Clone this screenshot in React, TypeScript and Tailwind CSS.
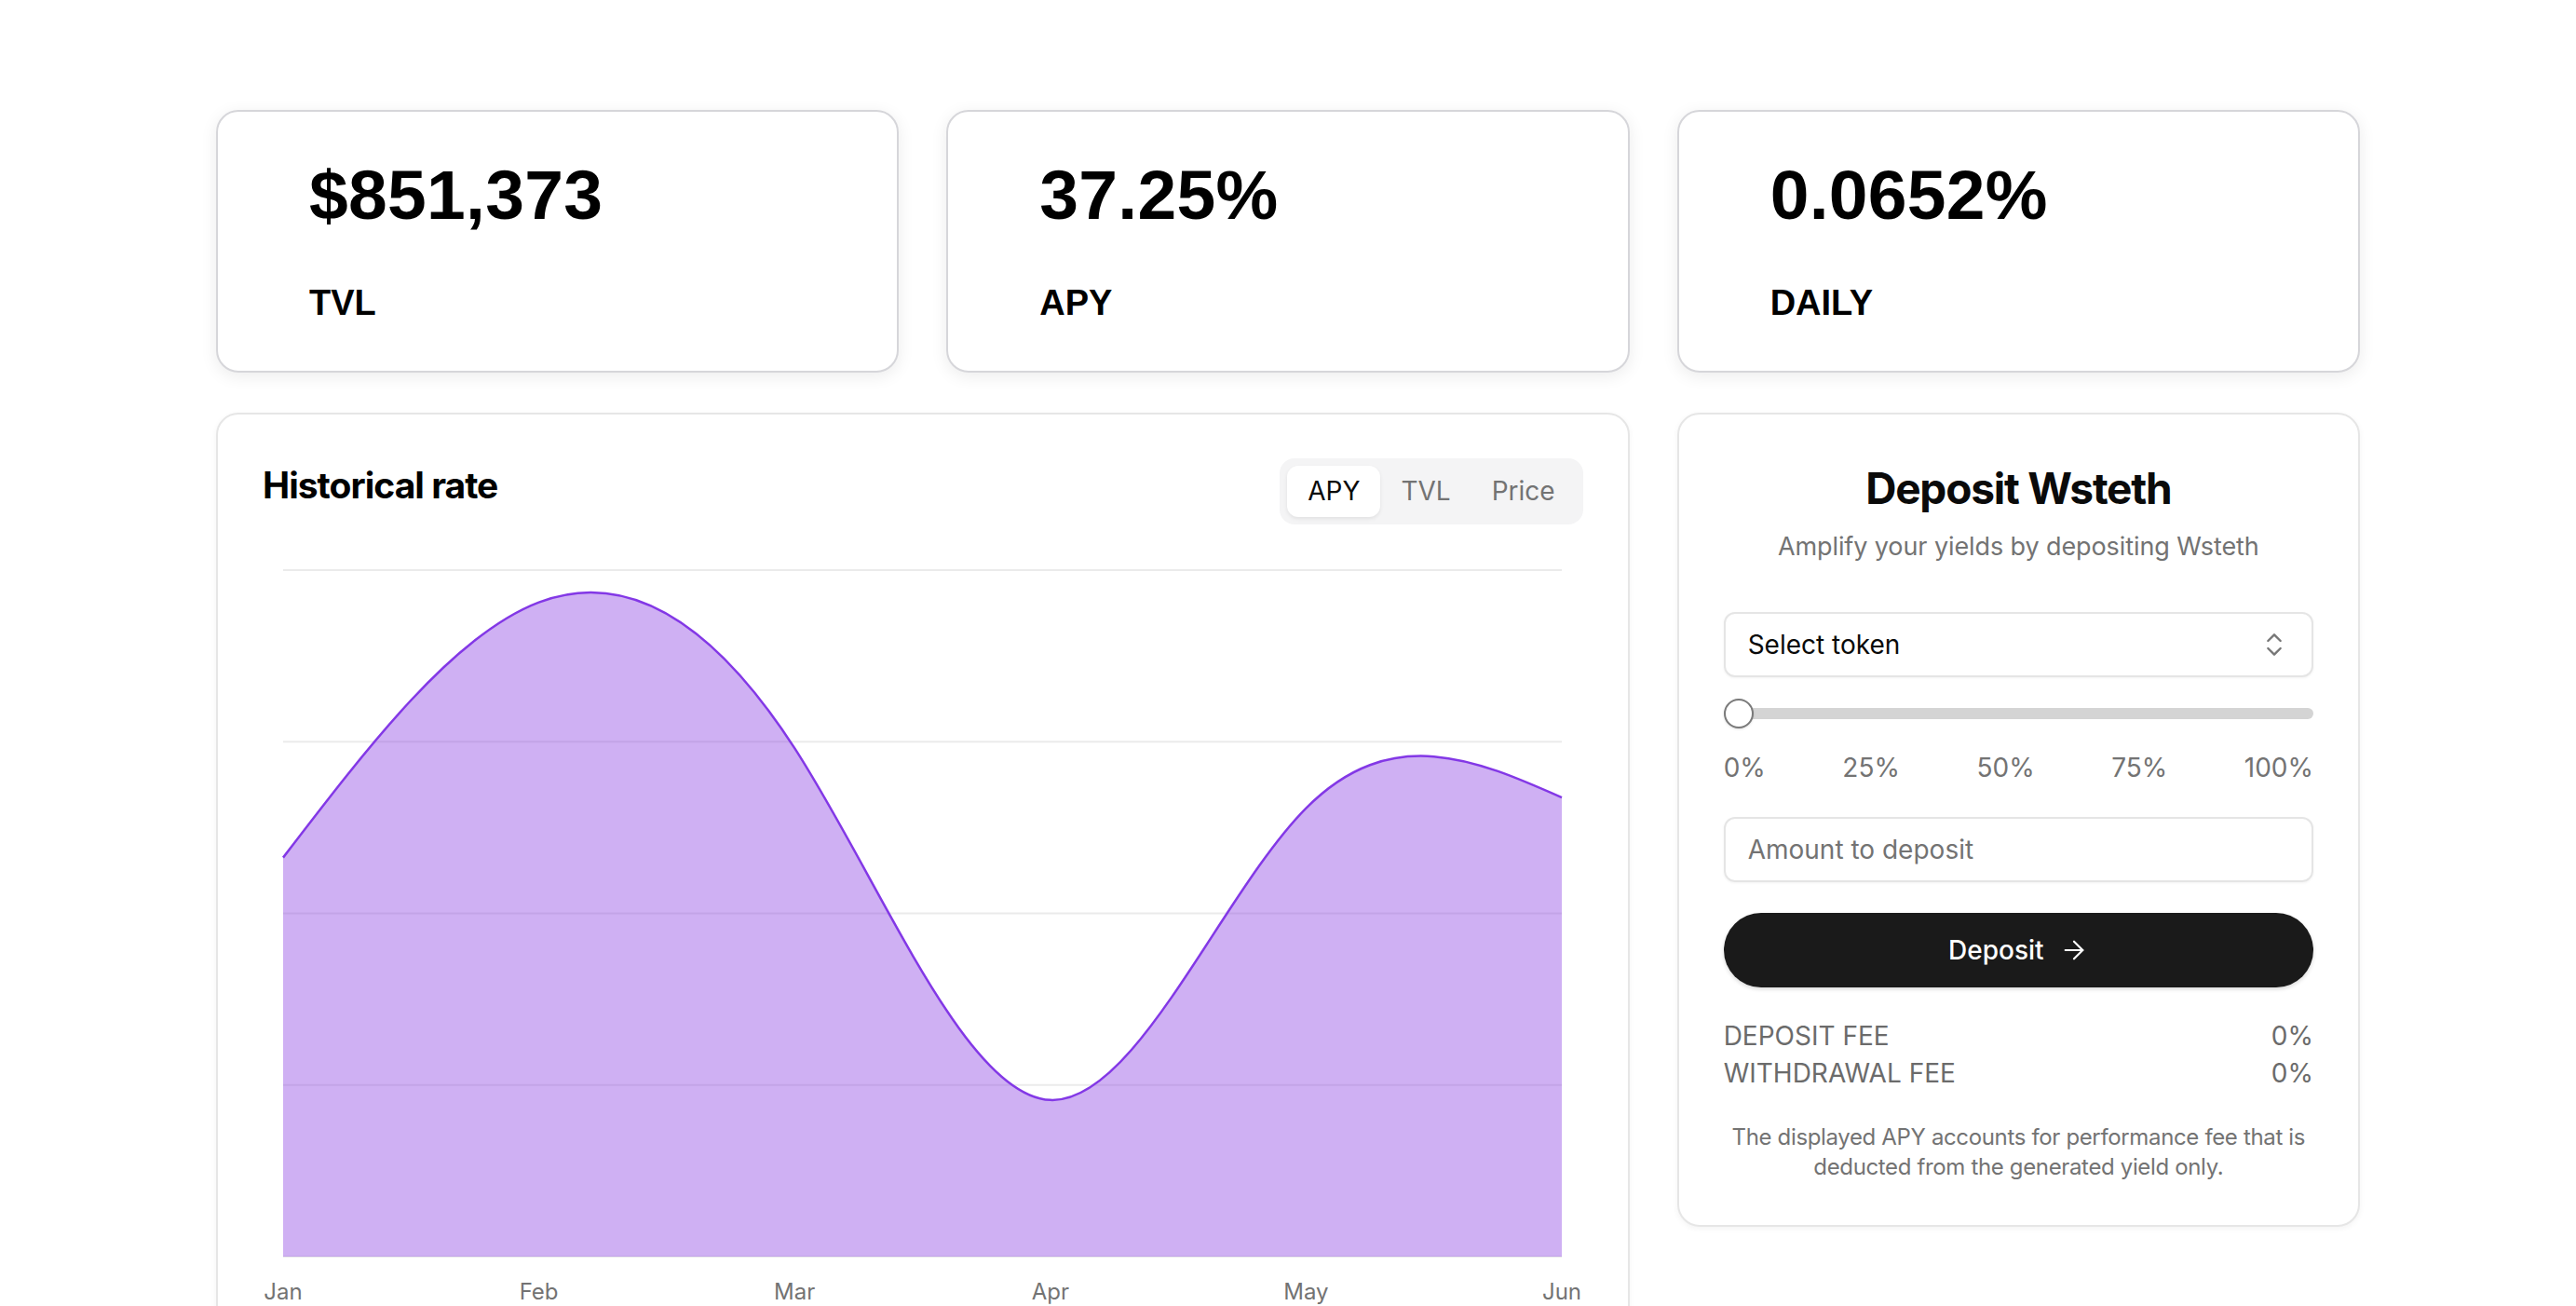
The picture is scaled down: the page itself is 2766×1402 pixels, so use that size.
import React from 'react';
import { ChevronsUpDown, ArrowRight } from 'lucide-react';

// Chart data (monthly APY samples)
const chartData = [
  { month: 'Jan', value: 186 },
  { month: 'Feb', value: 305 },
  { month: 'Mar', value: 237 },
  { month: 'Apr', value: 73 },
  { month: 'May', value: 209 },
  { month: 'Jun', value: 214 },
];

const PLOT_LEFT = 22;
const PLOT_RIGHT = 1395;
const PLOT_TOP = 49;
const PLOT_BOTTOM = 786;
const Y_MAX = 320;

// natural cubic spline control points (same maths as d3 curveNatural)
function controlPoints(x: number[]) {
  const n = x.length - 1;
  const a = new Array(n);
  const b = new Array(n);
  const r = new Array(n);
  a[0] = 0;
  b[0] = 2;
  r[0] = x[0] + 2 * x[1];
  for (let i = 1; i < n - 1; ++i) {
    a[i] = 1;
    b[i] = 4;
    r[i] = 4 * x[i] + 2 * x[i + 1];
  }
  a[n - 1] = 2;
  b[n - 1] = 7;
  r[n - 1] = 8 * x[n - 1] + x[n];
  for (let i = 1; i < n; ++i) {
    const m = a[i] / b[i - 1];
    b[i] -= m;
    r[i] -= m * r[i - 1];
  }
  a[n - 1] = r[n - 1] / b[n - 1];
  for (let i = n - 2; i >= 0; --i) a[i] = (r[i] - a[i + 1]) / b[i];
  b[n - 1] = (x[n] + a[n - 1]) / 2;
  for (let i = 0; i < n - 1; ++i) b[i] = 2 * x[i + 1] - a[i + 1];
  return [a, b];
}

function buildPaths() {
  const step = (PLOT_RIGHT - PLOT_LEFT) / (chartData.length - 1);
  const xs = chartData.map((_, i) => PLOT_LEFT + i * step);
  const ys = chartData.map((d) => PLOT_BOTTOM - (d.value / Y_MAX) * (PLOT_BOTTOM - PLOT_TOP));
  const px = controlPoints(xs);
  const py = controlPoints(ys);
  let line = `M${xs[0]},${ys[0]}`;
  for (let i = 0; i < xs.length - 1; i++) {
    line += `C${px[0][i]},${py[0][i]},${px[1][i]},${py[1][i]},${xs[i + 1]},${ys[i + 1]}`;
  }
  const area = `${line}L${xs[xs.length - 1]},${PLOT_BOTTOM}L${xs[0]},${PLOT_BOTTOM}Z`;
  return { line, area, xs };
}

function StatCard({ value, label }: { value: string; label: string }) {
  return (
    <div className="bg-white border-2 border-[#d6d6da] rounded-[24px] shadow-[0_4px_18px_rgba(0,0,0,0.08)] pt-[49px] pb-[51px] px-[98px] font-['Liberation_Sans',Arial,sans-serif] text-black">
      <div className="text-[75px] leading-[80px] font-bold tracking-[0.3px]">{value}</div>
      <div className="mt-[54px] text-[38px] leading-[44px] font-bold">{label}</div>
    </div>
  );
}

function HistoricalChart() {
  const { line, area, xs } = buildPaths();
  const gridYs = [0, 1, 2, 3, 4].map((i) => PLOT_TOP + (i * (PLOT_BOTTOM - PLOT_TOP)) / 4);

  return (
    <div className="col-span-2 bg-white border-2 border-[#e6e6e6] rounded-[24px] shadow-[0_2px_6px_rgba(0,0,0,0.05)] pt-[47px] pb-[48px] px-[48px]">
      <div className="flex items-start justify-between">
        <h2 className="mt-[5px] text-[39px] leading-[48px] font-bold tracking-tight text-black">
          Historical rate
        </h2>
        <div className="flex bg-[#f4f4f5] rounded-[16px] p-[8px] text-[28px] leading-[55px]">
          <button className="px-[22px] bg-white rounded-[12px] text-[#0a0a0a] shadow-[0_2px_4px_rgba(0,0,0,0.08)]">APY</button>
          <button className="px-[22px] text-[#737373]">TVL</button>
          <button className="px-[22px] text-[#737373]">Price</button>
        </div>
      </div>

      <svg width="1417" height="860" viewBox="0 0 1417 860" className="block">
        {gridYs.map((y) => (
          <line key={y} x1={PLOT_LEFT} x2={PLOT_RIGHT} y1={y} y2={y} stroke="#ebebeb" strokeWidth="2" />
        ))}
        <path d={area} fill="#873ae1" fillOpacity="0.4" />
        <path d={line} fill="none" stroke="#8338e6" strokeWidth="2.5" />
        {chartData.map((d, i) => (
          <text
            key={d.month}
            x={xs[i]}
            y={832}
            textAnchor="middle"
            fontSize="24"
            fill="#737373"
            fontFamily="Inter, sans-serif"
          >
            {d.month}
          </text>
        ))}
      </svg>
    </div>
  );
}

function DepositCard() {
  return (
    <div className="self-start bg-white border-2 border-[#e6e6e6] rounded-[24px] shadow-[0_2px_6px_rgba(0,0,0,0.05)] pt-[47px] pb-[46px] px-[48px] flex flex-col">
      <h2 className="text-center text-[46px] leading-[64px] font-bold tracking-[-1.2px] text-[#0a0a0a]">
        Deposit Wsteth
      </h2>
      <p className="mt-[11px] text-center text-[27px] leading-[40px] text-[#737373] tracking-[-0.1px]">
        Amplify your yields by depositing Wsteth
      </p>

      <button className="mt-[50px] h-[70px] flex items-center justify-between px-[24px] border-2 border-[#e5e5e5] rounded-[12px] bg-white shadow-[0_1px_3px_rgba(0,0,0,0.05)] text-[28px] text-[#0a0a0a]">
        <span>Select token</span>
        <ChevronsUpDown size={32} strokeWidth={1.8} className="text-[#777]" />
      </button>

      <div className="mt-[23px] relative h-[32px] flex items-center">
        <div className="w-full h-[12px] rounded-full bg-[#d4d4d4]" />
        <div className="absolute left-0 top-0 size-[32px] rounded-full bg-white border-2 border-[#7a7a7a] shadow-sm" />
      </div>

      <div className="mt-[22px] flex justify-between text-[28px] leading-[40px] text-[#737373]">
        <span>0%</span>
        <span>25%</span>
        <span>50%</span>
        <span>75%</span>
        <span>100%</span>
      </div>

      <input
        className="mt-[33px] h-[70px] px-[24px] border-2 border-[#e5e5e5] rounded-[12px] shadow-[0_1px_3px_rgba(0,0,0,0.05)] text-[28px] placeholder:text-[#737373] outline-none"
        placeholder="Amount to deposit"
      />

      <button className="mt-[33px] h-[80px] rounded-full bg-[#1a1a1a] text-white text-[28px] font-medium flex items-center justify-center gap-[16px] shadow-[0_2px_4px_rgba(0,0,0,0.15)]">
        Deposit
        <ArrowRight size={32} strokeWidth={1.6} />
      </button>

      <div className="mt-[32px] text-[28px] leading-[40px] text-[#6b6b6b]">
        <div className="flex justify-between">
          <span>DEPOSIT FEE</span>
          <span>0%</span>
        </div>
        <div className="flex justify-between">
          <span>WITHDRAWAL FEE</span>
          <span>0%</span>
        </div>
      </div>

      <p className="mt-[33px] text-center text-[24px] leading-[32px] text-[#737373] tracking-[-0.35px]">
        The displayed APY accounts for performance fee that is deducted from the generated yield only.
      </p>
    </div>
  );
}

export default function App() {
  return (
    <div className="min-h-screen bg-white pt-[118px] font-['Inter',sans-serif]">
      <div className="w-[2302px] mx-auto grid grid-cols-3 gap-x-[51px] gap-y-[43px]">
        <StatCard value="$851,373" label="TVL" />
        <StatCard value="37.25%" label="APY" />
        <StatCard value="0.0652%" label="DAILY" />
        <HistoricalChart />
        <DepositCard />
      </div>
    </div>
  );
}
